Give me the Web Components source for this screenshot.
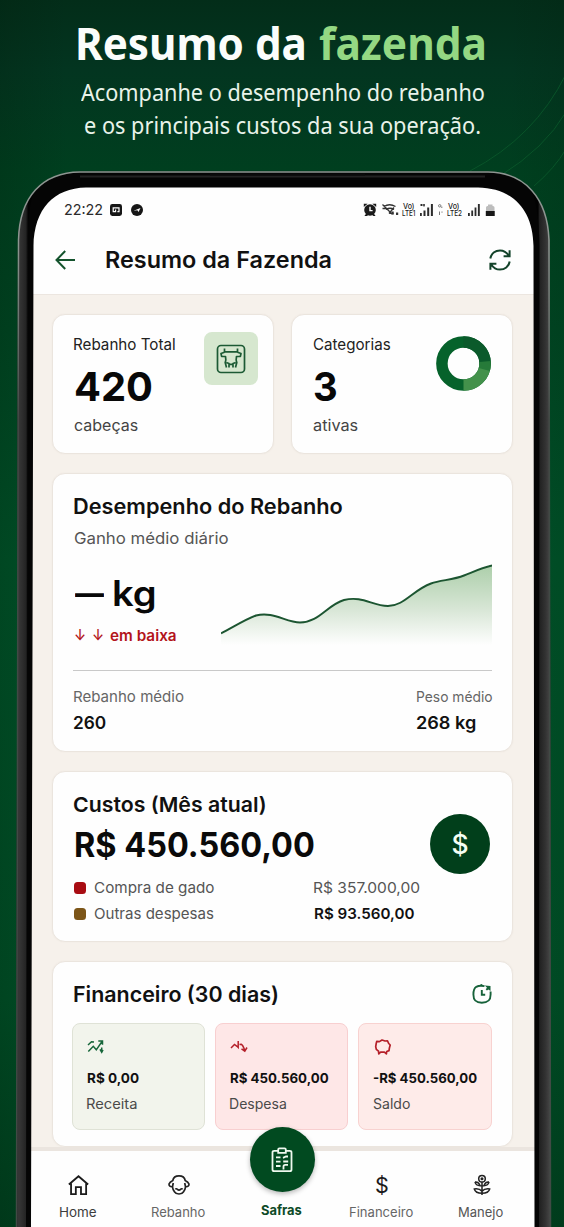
<!DOCTYPE html>
<html lang="pt-BR">
<head>
<meta charset="utf-8">
<title>Resumo da fazenda</title>
<style>
html,body{margin:0;padding:0}
body{width:564px;height:1227px;overflow:hidden;font-family:Inter,"Liberation Sans",sans-serif;color:#111}
</style>
</head>
<body>
<farm-promo></farm-promo>
<script>
const define = (name, html, setup) => {
  const t = document.createElement('template');
  t.innerHTML = html;
  customElements.define(name, class extends HTMLElement {
    constructor() {
      super();
      this.attachShadow({ mode: 'open' }).append(t.content.cloneNode(true));
    }
    connectedCallback() { if (setup) setup(this, this.shadowRoot); }
  });
};

/* Text run whose letters are widened or narrowed to fill a given ink width. */
const ctx = document.createElement('canvas').getContext('2d');
class FitText extends HTMLElement {
  connectedCallback() {
    if (this.shadowRoot) return;
    const a = (n, d) => this.getAttribute(n) || d;
    const size = +a('size', 16), weight = a('weight', 400), w = +a('w', 0);
    const font = a('font', 'Inter'), text = a('text', '');
    ctx.font = `${weight} ${size}px "${font}", sans-serif`;
    const m = ctx.measureText(text);
    const ink = m.actualBoundingBoxRight + m.actualBoundingBoxLeft;
    const k = w ? w / ink : 1;
    const root = this.attachShadow({ mode: 'open' });
    root.innerHTML = `<style>
      :host{display:block;flex:none;white-space:nowrap;width:${w || ink}px;font:${weight} ${size}px/${a('lh', 20)}px "${font}",sans-serif;color:${a('color', '#111')}}
      span{display:block;width:max-content;transform-origin:0 50%;transform:scaleX(${k.toFixed(4)});margin-left:${(m.actualBoundingBoxLeft * k).toFixed(2)}px}
    </style><span></span>`;
    root.querySelector('span').textContent = text;
  }
}
customElements.define('fit-text', FitText);

define('promo-heading', `
<style>
:host{display:flex;flex-direction:column;height:171px;box-sizing:border-box;padding-top:17px}
.t{display:flex;gap:14px;padding-left:78px}
.a{padding:7px 0 0 81px}.b{padding:2px 0 0 85px}
</style>
<div class="t"><fit-text text="Resumo da" font="Noto Sans" weight="700" size="44.500" lh="52" w="226.500" color="#fbfdfb"></fit-text><fit-text text="fazenda" font="Noto Sans" weight="700" size="44.500" lh="52" w="165.500" color="#94d883"></fit-text></div>
<div class="a"><fit-text text="Acompanhe o desempenho do rebanho" font="Noto Sans" size="23" lh="32" w="403" color="#e9f3ea"></fit-text></div>
<div class="b"><fit-text text="e os principais custos da sua operação." font="Noto Sans" size="23" lh="30" w="395" color="#e9f3ea"></fit-text></div>
`);

define('status-bar', `
<style>
:host{display:flex;align-items:center;height:46px;padding:0 40px 0 34px;box-sizing:border-box}
svg{display:block;flex:none}
.l{display:flex;align-items:center;gap:8px}
.r{display:flex;align-items:center;margin-left:auto}
</style>
<div class="l">
<fit-text text="22:22" size="15" w="38" lh="18" color="#2b2b2b"></fit-text>
<svg width="12" height="12" viewBox="0 0 12 12" style="margin-left:-1px"><rect width="12" height="12" rx="2.4" fill="#161616"/><path d="M5.200 3.800H3.200v3.800h2.400v-2M5 3.800H9v3.800H7.400" fill="none" stroke="#fff" stroke-width="1.200"/></svg>
<svg width="12" height="12" viewBox="0 0 12 12" style="margin-left:1px"><circle cx="6" cy="6" r="6" fill="#161616"/><path d="M2.600 6.700L9.500 4 7.500 8 6.400 6.300z" fill="#fff"/></svg>
</div>
<div class="r">
<svg width="132" height="14" viewBox="363 203 132 14">
<g fill="#1b1b1b"><circle cx="370" cy="210" r="5.800"/><path d="M363.800 207v-3.200h3.800zM376.200 207v-3.200h-3.800zM364.400 216l2.200-3h6.800l2.200 3h-2.200l-1.200-.9h-4l-1.200.9z"/></g>
<path d="M370 206.800v3.800h2.600" stroke="#fff" stroke-width="1.400" fill="none"/>
<g fill="none" stroke="#333" stroke-width="1.300"><path d="M382.500 204.500l9 9M384 206.500q5.500-3.500 11.500 0M386 209.500q4-2.500 8 0M382.500 208.500h4M389 213.500l5-6M391 213.500h2.500"/></g>
<g fill="#333"><rect x="391.500" y="211.500" width="2.200" height="3"/><rect x="396" y="212.500" width="2.200" height="2.500"/></g>
<g fill="#2c2c2c"><rect x="420" y="213" width="1.800" height="3"/><rect x="423.500" y="210.500" width="2" height="5.500"/><rect x="427.200" y="207.500" width="2" height="8.500"/><rect x="430.900" y="204" width="2" height="12"/>
<rect x="420.500" y="204" width="2" height="2"/><rect x="423.200" y="204" width="1.600" height="2.400"/>
<rect x="468" y="213" width="1.800" height="3"/><rect x="471.300" y="210.500" width="1.800" height="5.500"/><rect x="474.600" y="207.500" width="1.800" height="8.500"/><rect x="477.900" y="204" width="1.900" height="12"/></g>
<g fill="none" stroke="#777" stroke-width="1"><circle cx="439.700" cy="205.800" r="1.200"/><path d="M441.800 206.500v1.500M439.500 211.500v3.500M442 211.500v1.200"/></g>
<path d="M486 216v-8.500q0-1.500 1.500-1.500h.5v-1.500h4.500v1.500h.5q1.500 0 1.500 1.500v8.500z" fill="#bdbdbd"/><path d="M485.800 211h8.900v5h-8.900z" fill="#171717"/>
<g font-family="Inter,sans-serif" fill="#222" font-weight="500"><text x="403" y="209.300" font-size="7.800" textLength="11.500" lengthAdjust="spacingAndGlyphs">Vo)</text><text x="402" y="216.300" font-size="7.600" textLength="13.500" lengthAdjust="spacingAndGlyphs">LTE1</text><text x="448" y="209.300" font-size="7.800" textLength="11.500" lengthAdjust="spacingAndGlyphs">Vo)</text><text x="447" y="216.300" font-size="7.600" textLength="15" lengthAdjust="spacingAndGlyphs">LTE2</text></g>
</svg>
</div>
`);

define('app-bar', `
<style>
:host{display:flex;align-items:center;height:61px;box-sizing:border-box;padding:0 24px 7px;}
svg{display:block;flex:none}
fit-text{margin-left:30px}
.r{margin-left:auto}
</style>
<svg width="21" height="20" viewBox="0 0 21 20" fill="none" stroke="#14532d" stroke-width="2"><path d="M20 10H1.800M10.200 1L1.500 10l8.700 9"/></svg>
<fit-text text="Resumo da Fazenda" size="22.500" weight="600" w="225" lh="30"></fit-text>
<svg class="r" width="22" height="22" viewBox="0 0 22 22" fill="none" stroke="#14432a" stroke-width="2"><path d="M1.300 9.500C2.200 4.500 6.300 1.400 11 1.400c3.600 0 6.600 1.700 8.700 5.200M20.600 1.200v6h-6M20.700 12.500c-.9 5-5 8.100-9.700 8.100-3.600 0-6.600-1.700-8.700-5.200M1.400 20.800v-6h6"/></svg>
`);

define('ui-card', `
<style>
:host{display:block;box-sizing:border-box;background:#fefefe;border:1px solid #ebe5de;border-radius:13px;box-shadow:0 0 2px rgba(120,90,60,.06)}
</style><slot></slot>`);

define('stat-card', `
<style>
:host{display:block;flex:1}
ui-card{height:140px;padding:20px 15px 0 21px;display:flex;justify-content:space-between;align-items:flex-start}
.c{display:flex;flex-direction:column}
</style>
<ui-card><div class="c"><slot></slot></div><slot name="icon"></slot></ui-card>`);

define('performance-card', `
<style>
ui-card{height:279px;padding:23px 20px 0 20px}
.m{display:flex;justify-content:space-between;margin-top:13px;height:109px}
.v{display:flex;align-items:center;gap:10px;margin-top:14px;padding-left:2px}
.e{display:flex;gap:8px;margin-top:15px;padding-left:2px}
.e fit-text+fit-text+fit-text{margin-left:-1px}
.f{border-top:1px solid #c9c9c9;display:flex;justify-content:space-between;padding-top:16px}
svg{display:block}
</style>
<ui-card>
<fit-text text="Desempenho do Rebanho" size="21" weight="600" w="268" lh="20" style="margin-left:1px"></fit-text>
<fit-text text="Ganho médio diário" size="16" w="154" lh="20" color="#555" style="margin:11px 0 0 1px"></fit-text>
<div class="m"><div>
<div class="v"><fit-text text="—" size="35" weight="600" w="29" lh="36" color="#080808"></fit-text><fit-text text="kg" size="35" weight="600" w="40.500" lh="36" color="#080808"></fit-text></div>
<div class="e"><fit-text text="↓" size="15.500" weight="500" w="10" color="#b3141b"></fit-text><fit-text text="↓" size="15.500" weight="500" w="10" color="#b3141b"></fit-text><fit-text text="em baixa" size="15" weight="600" w="66" color="#b3141b"></fit-text></div>
</div>
<svg width="271" height="86" viewBox="220 561 271 86"><defs><linearGradient id="g" x1="0" y1="562" x2="0" y2="645" gradientUnits="userSpaceOnUse"><stop offset="0" stop-color="#a9cda7"/><stop offset=".55" stop-color="#d6e5d4"/><stop offset="1" stop-color="#fefefe"/></linearGradient></defs>
<path d="M220 633.300C231 628 243 620 255 615.500C272 611 285 622.500 299 622.500C318 622.500 326 605 343 600C362 595.500 371 606 387 606C403 606 412 590 430 583.500C440 580 452 580 463 575.500C472 572 480 568 491 565.500V645H220z" fill="url(#g)"/>
<path d="M220 633.300C231 628 243 620 255 615.500C272 611 285 622.500 299 622.500C318 622.500 326 605 343 600C362 595.500 371 606 387 606C403 606 412 590 430 583.500C440 580 452 580 463 575.500C472 572 480 568 491 565.500" fill="none" stroke="#1c5531" stroke-width="1.900"/></svg>
</div>
<div class="f">
<div><fit-text text="Rebanho médio" size="15" w="110" color="#666" style="margin-left:1px"></fit-text><fit-text text="260" size="17" weight="600" w="32" style="margin:6px 0 0 1px"></fit-text></div>
<div><fit-text text="Peso médio" size="14.500" w="75" color="#666"></fit-text><fit-text text="268 kg" size="17" weight="600" w="58.500" style="margin-top:6px"></fit-text></div>
</div>
</ui-card>`);

define('cost-card', `
<style>
ui-card{height:171px;padding:23px 22px 0 21px;display:flex;justify-content:space-between}
.d{width:60px;height:60px;border-radius:50%;background:#013f1b;margin-top:19px;display:grid;place-items:center}
.g{display:grid;grid-template-columns:12px 213.500px auto;column-gap:7.500px;row-gap:6px;align-items:center;margin-top:14px}
i{width:12px;height:12px;border-radius:3.500px}
</style>
<ui-card><div>
<fit-text text="Custos (Mês atual)" size="20.500" weight="600" w="191" lh="20"></fit-text>
<fit-text text="R$ 450.560,00" size="34" weight="700" w="238" lh="38" color="#0a0a0a" style="margin:11px 0 0 1.500px"></fit-text>
<div class="g"><i style="background:#a80c12"></i><fit-text text="Compra de gado" size="15" w="120.500" color="#555"></fit-text><fit-text text="R$ 357.000,00" size="15" w="105.500" color="#555"></fit-text>
<i style="background:#7c5518"></i><fit-text text="Outras despesas" size="15" w="120" color="#555"></fit-text><fit-text text="R$ 93.560,00" size="15" weight="600" w="99.500"></fit-text></div>
</div><div class="d"><fit-text text="$" size="26.500" weight="500" lh="28" color="#f5fff5"></fit-text></div></ui-card>`);

define('finance-tile', `
<style>
:host{display:flex;flex-direction:column;box-sizing:border-box;height:107px;border:1px solid var(--line);background:var(--fill);border-radius:8px;padding:13px 0 0 14.500px}
::slotted(svg){display:block;margin-bottom:11px}
</style><slot></slot>`);

define('finance-card', `
<style>
ui-card{height:186px;padding:22px 20px 0 20px}
.h{display:flex;justify-content:space-between;align-items:center;height:20px}
.t{display:grid;grid-template-columns:133.500px 133.500px 134px;gap:9.500px;margin:19px 0 0 -1.500px}
</style>
<ui-card>
<div class="h"><fit-text text="Financeiro (30 dias)" size="21.500" weight="600" w="204" lh="20" style="margin-left:1px"></fit-text>
<svg width="20" height="20" viewBox="0 0 20 20" fill="none" stroke="#17623a" stroke-width="1.900"><path d="M12.500 2.200C10 1.600 6.500 1.600 4.300 2.800C1.800 4.300 1.400 7 1.400 10.500C1.400 16 3.500 18.700 9.800 18.700C16.500 18.700 18.600 16 18.600 10.500V7.500M9.800 6v4.800h3.400M8 1.600L10.400.8"/><path d="M12.800 1.600l5.700.3v5.100l-2-1.600-1.600 1.200-1.200-1.400 1.300-1.400z" fill="#17623a" stroke="none"/></svg></div>
<div class="t">
<finance-tile style="--fill:#f2f4ec;--line:#dfe2d6"><svg width="18" height="20" viewBox="0 0 18 20" fill="none" stroke="#17663a" stroke-width="1.500"><path d="M1 8l3.500-3.200 2.500.2M1.300 14.500l5-5.200 3 3.500L15 4.500M11.300 4h4.200v3.800M14.700 10.500v4.500M13 12.300l1.700 3 1.300-2.500"/></svg><fit-text text="R$ 0,00" size="13.500" weight="700" w="52"></fit-text><fit-text text="Receita" size="14" w="49.500" color="#4a4a4a" style="margin-top:6px"></fit-text></finance-tile>
<finance-tile style="--fill:#fee7e7;--line:#f8cfd0"><svg width="18" height="20" viewBox="0 0 18 20" fill="none" stroke="#b5202a" stroke-width="1.500"><path d="M1 11l3.500-3.500L7 9.300l1.200 1.200V4M9.500 7.500l1.700-.3c1.800.8 2.500 3.300 3.600 6.300M11.500 11.800l3.300 2.400 2.200-3.700"/></svg><fit-text text="R$ 450.560,00" size="13.500" weight="700" w="98.500"></fit-text><fit-text text="Despesa" size="14" w="56" color="#4a4a4a" style="margin-top:6px"></fit-text></finance-tile>
<finance-tile style="--fill:#feebe9;--line:#f8d2d0"><svg width="20" height="20" viewBox="0 0 20 20" fill="none" stroke="#b5202a" stroke-width="1.700" stroke-linejoin="round"><path d="M3.200 6.500l.6-2.200 2.600.3 2.600-1.600 3 1 2.500-.2 1.200 2.700 1.500 1.500-.8 3-.4 2.600-2.300.9-.3 2.300-2-1.700H7.600l-1.800 1.700-.3-2.600-2.200-1.900-.6-2.700z"/></svg><fit-text text="-R$ 450.560,00" size="13.500" weight="700" w="104"></fit-text><fit-text text="Saldo" size="14" w="37" color="#4a4a4a" style="margin-top:6px"></fit-text></finance-tile>
</div></ui-card>`);

define('nav-item', `
<style>
:host{display:flex;flex-direction:column;align-items:center;padding-top:23px}
.i{height:22px;display:flex;align-items:center;margin-bottom:6px}
</style><div class="i"><slot name="icon"></slot></div><slot></slot>`);

define('bottom-nav', `
<style>
:host{display:grid;grid-template-columns:100px 101px 104px 98px 101px;margin-left:-3px;height:76px;background:#fefefe;border-top:4px solid #ebe5df;position:relative;box-sizing:content-box}
.fab{position:absolute;left:221.500px;top:-24px;width:65px;height:65px;border-radius:50%;background:#014a20;box-shadow:0 2px 5px rgba(0,0,0,.28);display:grid;place-items:center}
svg{display:block}
</style>
<nav-item><svg slot="icon" width="21" height="22" viewBox="0 0 22 22" fill="none" stroke="#1b1b1b" stroke-width="1.900"><path d="M.9 10.500L11 1.900 21.100 10.500M3.200 9.500v11h5v-7.200h5.400v7.200H19v-11"/></svg><fit-text text="Home" size="13" w="36" color="#3c3c3c"></fit-text></nav-item>
<nav-item><svg slot="icon" width="22" height="22" viewBox="0 0 22 22" fill="none" stroke="#222" stroke-width="1.700" stroke-linejoin="round"><path d="M4.800 6.500C5.300 3.600 8 1.800 11 1.800s5.700 1.800 6.200 4.700c1.500.7 3.200 2 3.800 3.500 0 2-1.200 3-3.400 2.700-.3 2-.7 3.700-2 5-1 1.500-2.600 2.300-4.600 2.300s-3.600-.8-4.600-2.300c-1.300-1.300-1.700-3-2-5C2.200 13 1 12 1 10c.6-1.500 2.300-2.800 3.800-3.500z"/><path d="M4.500 12.500L5.300 9M17.500 12.500L16.700 9M7.200 15.200q1.300-1 2.200.2 1.600 1.500 3.200 0 .9-1.200 2.200-.2"/></svg><fit-text text="Rebanho" size="13" w="53.500" color="#666"></fit-text></nav-item>
<nav-item><span slot="icon"></span><fit-text text="Safras" size="13" weight="700" w="40.500" color="#0d4a27" style="margin-top:-2px"></fit-text></nav-item>
<nav-item><fit-text slot="icon" text="$" size="21.500" lh="22" color="#1b1b1b"></fit-text><fit-text text="Financeiro" size="13" w="63.500" color="#666"></fit-text></nav-item>
<nav-item><svg slot="icon" width="18" height="22" viewBox="0 0 18 22" fill="none" stroke="#222" stroke-width="1.500"><circle cx="9" cy="4.800" r="3.300"/><circle cx="9" cy="4.800" r=".8"/><path d="M9 8v13M2 8c.5 3 3 4 7 4 4 0 6.500-1 7-4M2 8q3.500-.5 5 3.500M16 8q-3.500-.5-5 3.500M1.300 15c1 3.500 3.700 4.300 7.700 4.300s6.700-.8 7.700-4.300q-5-.8-7.700 2.300-2.700-3.100-7.700-2.300z"/></svg><fit-text text="Manejo" size="13" w="44.500" color="#555"></fit-text></nav-item>
<div class="fab"><svg width="22" height="26" viewBox="0 0 22 26" fill="none" stroke="#eef8ee" stroke-width="1.800"><path d="M7 3.800H3.200Q1.500 3.800 1.500 5.500v17q0 1.700 1.700 1.700h15.600q1.700 0 1.700-1.700v-17q0-1.700-1.700-1.700H15"/><path d="M7.200 5.800V2.500Q7.200 1.300 8.400 1.300h5.200q1.200 0 1.200 1.200v3.300z"/><path d="M5 10.300h4.500M12 10.800l3-1.300h2M5 14.700h4.500M5 19h4.500M12.200 14.500h5M12.500 22.500v-3q0-1.600 1.600-1.600H17"/></svg></div>
`);

define('phone-bezel', `
<style>:host{position:absolute;left:0;top:165px;width:564px;height:1062px}svg{display:block}</style>
<svg width="564" height="1062" viewBox="0 165 564 1062">
<defs><linearGradient id="b" x1="16" x2="34" y1="0" y2="0" gradientUnits="userSpaceOnUse"><stop offset="0" stop-color="#1d1f1e"/><stop offset=".15" stop-color="#373737"/><stop offset=".55" stop-color="#242424"/><stop offset=".68" stop-color="#020202"/></linearGradient>
<linearGradient id="c" x1="551" x2="533" y1="0" y2="0" gradientUnits="userSpaceOnUse"><stop offset="0" stop-color="#4a4a4a"/><stop offset=".3" stop-color="#333"/><stop offset=".65" stop-color="#202020"/><stop offset=".72" stop-color="#020202"/></linearGradient>
<linearGradient id="e" x1="0" x2="0" y1="171" y2="420" gradientUnits="userSpaceOnUse"><stop offset="0" stop-color="#8d9691"/><stop offset=".28" stop-color="#8d9691"/><stop offset="1" stop-color="#414a45"/></linearGradient></defs>
<path fill="#050505" fill-rule="evenodd" d="M16 1227L18 240C19 197 42 172 80 171.500H488C525 172 548 198 549.500 240L551 1227H534.500L533.500 246C533 209 512 188 478 187.500H86C54 188 34 209 33.500 246L31 1227z"/>
<path fill="url(#b)" d="M16 1227L18 240C19 218 25 202 34 191Q27 212 28 246L26 1227z"/>
<path fill="url(#c)" d="M551 1227L549.500 240C549 218 541 200 532 191Q539 212 539.500 246L539 1227z"/>
<path fill="none" stroke="url(#e)" stroke-width="1.500" d="M16.500 1227L18.500 240C19.500 197 42 172.500 80 172H488C525 172.500 547.500 198 549 240L550.500 1227"/>
<path d="M80 176.500H485" stroke="#222" stroke-width="2"/><path d="M210 174.500H365" stroke="#0a0a0a" stroke-width="2"/>
</svg>`);

define('farm-promo', `
<style>
:host{display:block;position:relative;width:564px;height:1227px;overflow:hidden;background:linear-gradient(90deg,rgba(0,25,8,.18),transparent 12%,transparent 90%,rgba(0,25,8,.1)),linear-gradient(180deg,#032d19 0,#033520 70px,#003f1f 170px,#004522 330px,#005128 560px,#004e26 1000px,#003f1e 1227px)}
.arcs{position:absolute;left:0;top:0}
.screen{margin:16px 0 0 31px;width:504px;height:1040px;border-radius:50px 50px 0 0;overflow:hidden;background:#fefefe;display:flex;flex-direction:column}
main{flex:1;background:#f6f1eb;border-top:1px solid #ece6e0;box-sizing:border-box;padding:19px 22px 0 21px;display:flex;flex-direction:column;gap:19px;min-height:0;overflow:hidden}
.row{display:flex;gap:17px}
.cow{width:54px;height:53px;border-radius:8px;background:#d6e7cf;display:grid;place-items:center;margin-top:-3px}
.donut{display:block;margin:1px 6px 0 0}
svg{display:block}
</style>
<svg class="arcs" width="564" height="240" fill="none" stroke="#0b5a2c" stroke-width="1" opacity=".8"><path d="M470 171Q535 137 566 74M500 176Q545 148 566 112M534 186Q555 168 566 149"/></svg>
<promo-heading></promo-heading>
<div class="screen">
<status-bar></status-bar>
<app-bar></app-bar>
<main>
<div class="row">
<stat-card><fit-text text="Rebanho Total" size="15.500" w="101" color="#222"></fit-text><fit-text text="420" size="40" weight="700" w="77" lh="44" color="#080808" style="margin:10px 0 7px 1px"></fit-text><fit-text text="cabeças" size="15.500" w="64" color="#444"></fit-text>
<div slot="icon" class="cow"><svg width="30" height="30" viewBox="0 0 30 30" fill="none" stroke="#1c5a34" stroke-width="1.700" stroke-linejoin="round"><rect x="1.500" y="1.500" width="27" height="27" rx="3.500"/><path d="M8.500 4.500v3.300H21.500V4.500M8.500 8.300L5 9.500l.6 2.800 3.900.2q.8 3.500-.3 6l1.300 5M21.500 8.300L25 9.500l-.6 2.800-3.900.2q-.8 3.500.3 6l-1.300 5M10.300 18.500l2.700 1v4M19.700 18.500l-2.700 1v4M13 20.300h4"/></svg></div></stat-card>
<stat-card><fit-text text="Categorias" size="15.500" w="77.500" color="#222"></fit-text><fit-text text="3" size="40" weight="700" w="22" lh="44" color="#080808" style="margin:10px 0 7px 1px"></fit-text><fit-text text="ativas" size="15.500" w="45" color="#444"></fit-text>
<svg slot="icon" class="donut" width="55" height="55" viewBox="-27.500 -27.500 55 55" fill="none" stroke-width="11.500"><circle r="21.600" stroke="#06622b"/><path d="M0-21.600A21.600 21.600 0 0 1 21.600 2" stroke="#0b5a2b"/><path d="M21.600 1A21.600 21.600 0 0 1 0 21.600" stroke="#43914b"/><path d="M20.800 6A21.600 21.600 0 0 0 21.500 -2" stroke="#267a39"/></svg></stat-card>
</div>
<performance-card></performance-card>
<cost-card></cost-card>
<finance-card></finance-card>
</main>
<bottom-nav></bottom-nav>
</div>
<phone-bezel></phone-bezel>
`);
</script>
</body>
</html>
